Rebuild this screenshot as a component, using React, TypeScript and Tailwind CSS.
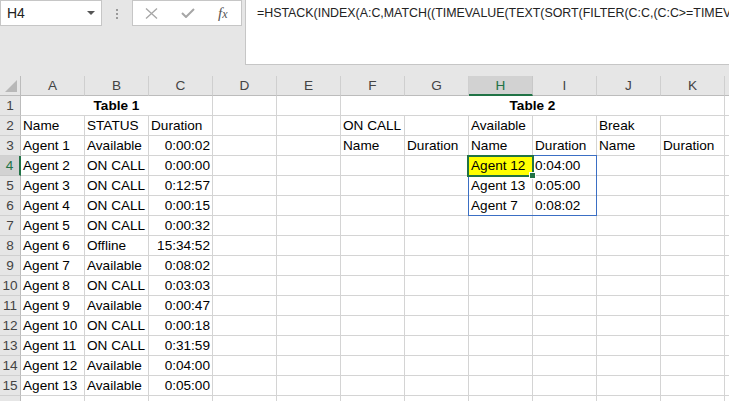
import React from 'react';

const COLS = ['A', 'B', 'C', 'D', 'E', 'F', 'G', 'H', 'I', 'J', 'K', 'L'];

const TABLE1: [string, string, string][] = [
  ['Agent 1', 'Available', '0:00:02'],
  ['Agent 2', 'ON CALL', '0:00:00'],
  ['Agent 3', 'ON CALL', '0:12:57'],
  ['Agent 4', 'ON CALL', '0:00:15'],
  ['Agent 5', 'ON CALL', '0:00:32'],
  ['Agent 6', 'Offline', '15:34:52'],
  ['Agent 7', 'Available', '0:08:02'],
  ['Agent 8', 'ON CALL', '0:03:03'],
  ['Agent 9', 'Available', '0:00:47'],
  ['Agent 10', 'ON CALL', '0:00:18'],
  ['Agent 11', 'ON CALL', '0:31:59'],
  ['Agent 12', 'Available', '0:04:00'],
  ['Agent 13', 'Available', '0:05:00'],
];

const AVAILABLE: [string, string][] = [
  ['Agent 12', '0:04:00'],
  ['Agent 13', '0:05:00'],
  ['Agent 7', '0:08:02'],
];

const FORMULA = '=HSTACK(INDEX(A:C,MATCH((TIMEVALUE(TEXT(SORT(FILTER(C:C,(C:C>=TIMEVALUE("0:04:00"))*(B:B="Available")),,1),"h:mm:ss"))),C:C,0),{1,3}))';

type Cell = { text?: string; right?: boolean; bold?: boolean; span?: number; yellow?: boolean };

function buildRow(r: number): Cell[] {
  if (r === 1) {
    return [{ text: 'Table 1', bold: true, span: 3 }, {}, {}, { text: 'Table 2', bold: true, span: 6 }, {}];
  }
  const cells: Cell[] = Array.from({ length: 12 }, () => ({}));
  if (r === 2) {
    cells[0] = { text: 'Name' };
    cells[1] = { text: 'STATUS' };
    cells[2] = { text: 'Duration' };
    cells[5] = { text: 'ON CALL' };
    cells[7] = { text: 'Available' };
    cells[9] = { text: 'Break' };
  } else if (r === 3) {
    cells[5] = { text: 'Name' };
    cells[6] = { text: 'Duration' };
    cells[7] = { text: 'Name' };
    cells[8] = { text: 'Duration' };
    cells[9] = { text: 'Name' };
    cells[10] = { text: 'Duration' };
  }
  const t = TABLE1[r - 3];
  if (r === 2) return cells;
  if (t) {
    cells[0] = { text: t[0] };
    cells[1] = { text: t[1] };
    cells[2] = { text: t[2], right: true };
  }
  const av = AVAILABLE[r - 4];
  if (av) {
    cells[7] = { text: av[0], yellow: r === 4 };
    cells[8] = { text: av[1] };
  }
  return cells;
}

function Toolbar() {
  return (
    <div className="flex h-[65px]">
      <div className="flex w-[245px] shrink-0 items-start">
        <div className="flex h-[26px] w-[102px] items-center justify-between border border-[#c6c6c6] bg-white pl-[6px] pr-[5px] text-[14px] text-[#222]">
          <span>H4</span>
          <svg width="9" height="5" viewBox="0 0 9 5"><path d="M0 0h8L4 4z" fill="#555" /></svg>
        </div>
        <div className="flex w-[30px] flex-col items-center gap-[2px] pt-[9px]">
          <span className="h-[2px] w-[2px] bg-[#9a9a9a]" />
          <span className="h-[2px] w-[2px] bg-[#9a9a9a]" />
          <span className="h-[2px] w-[2px] bg-[#9a9a9a]" />
        </div>
        <div className="flex h-[26px] w-[110px] items-center border border-[#c6c6c6] bg-white">
          <svg className="ml-[12px]" width="13" height="11" viewBox="0 0 13 11">
            <path d="M1 0.5L12 10.5M12 0.5L1 10.5" stroke="#a6a6a6" strokeWidth="1.3" />
          </svg>
          <svg className="ml-[23px]" width="14" height="10" viewBox="0 0 14 10">
            <path d="M1 5L5 9L13 1" stroke="#a6a6a6" strokeWidth="2" fill="none" />
          </svg>
          <span className="ml-[23px] font-['Liberation_Serif',serif] text-[15px] italic text-[#555]">
            f<span className="text-[12px]">x</span>
          </span>
        </div>
      </div>
      <div className="min-w-0 flex-1 overflow-hidden border-b border-l border-[#c6c6c6] bg-white pl-[11px] pt-[4px]">
        <div className="whitespace-nowrap text-[12.4px] leading-[18px] text-[#222]">{FORMULA}</div>
      </div>
    </div>
  );
}

export default function App() {
  const rows = Array.from({ length: 16 }, (_, i) => i + 1);
  return (
    <div className="h-[401px] w-[729px] overflow-hidden bg-[#e6e6e6] font-['Liberation_Sans',Arial,sans-serif]">
      <Toolbar />
      <div className="h-[11px]" />
      <div className="relative">
        <div className="grid grid-cols-[21px_repeat(11,64px)_64px] auto-rows-[20px] text-[13.6px] leading-[19px]">
          {/* header row */}
          <div className="flex items-end justify-end border-b border-r border-[#bcbcbc] pb-[3px] pr-[3px]">
            <svg width="12" height="12" viewBox="0 0 12 12"><path d="M12 0V12H0z" fill="#b8b8b8" /></svg>
          </div>
          {COLS.map((c) =>
            c === 'H' ? (
              <div key={c} className="flex items-center justify-center border-b-2 border-r border-b-[#217346] border-r-[#c8c8c8] bg-[#d2d2d2] text-[#217346]">
                {c}
              </div>
            ) : (
              <div key={c} className="flex items-center justify-center border-b border-r border-b-[#bcbcbc] border-r-[#cfcfcf] text-[#444]">
                {c}
              </div>
            )
          )}
          {rows.map((r) => (
            <React.Fragment key={r}>
              {r === 4 ? (
                <div className="flex items-center justify-center border-b border-r-2 border-b-[#c8c8c8] border-r-[#217346] bg-[#d2d2d2] text-[#217346]">
                  {r}
                </div>
              ) : (
                <div className="flex items-center justify-center border-b border-r border-b-[#d0d0d0] border-r-[#bcbcbc] text-[#444]">
                  {r}
                </div>
              )}
              {buildRow(r).map((cell, i) => (
                <div
                  key={i}
                  className={[
                    'overflow-visible whitespace-nowrap border-b border-r border-[#d4d4d4] px-[2px] text-black',
                    cell.yellow ? 'bg-[#ffff00]' : 'bg-white',
                    cell.right ? 'text-right' : '',
                    cell.bold ? 'text-center font-bold' : '',
                    cell.span === 3 ? 'col-span-3' : '',
                    cell.span === 6 ? 'col-span-6' : '',
                  ].join(' ')}
                >
                  {cell.text}
                </div>
              ))}
            </React.Fragment>
          ))}
        </div>
        {/* spill range border */}
        <div className="pointer-events-none absolute left-[468px] top-[79px] h-[61px] w-[129px] border border-[#3b6fc4]" />
        {/* active cell */}
        <div className="pointer-events-none absolute left-[467px] top-[79px] h-[22px] w-[67px] border-2 border-[#217346]" />
        <div className="pointer-events-none absolute left-[529px] top-[96px] h-[7px] w-[7px] border border-white bg-[#217346]" />
      </div>
    </div>
  );
}
